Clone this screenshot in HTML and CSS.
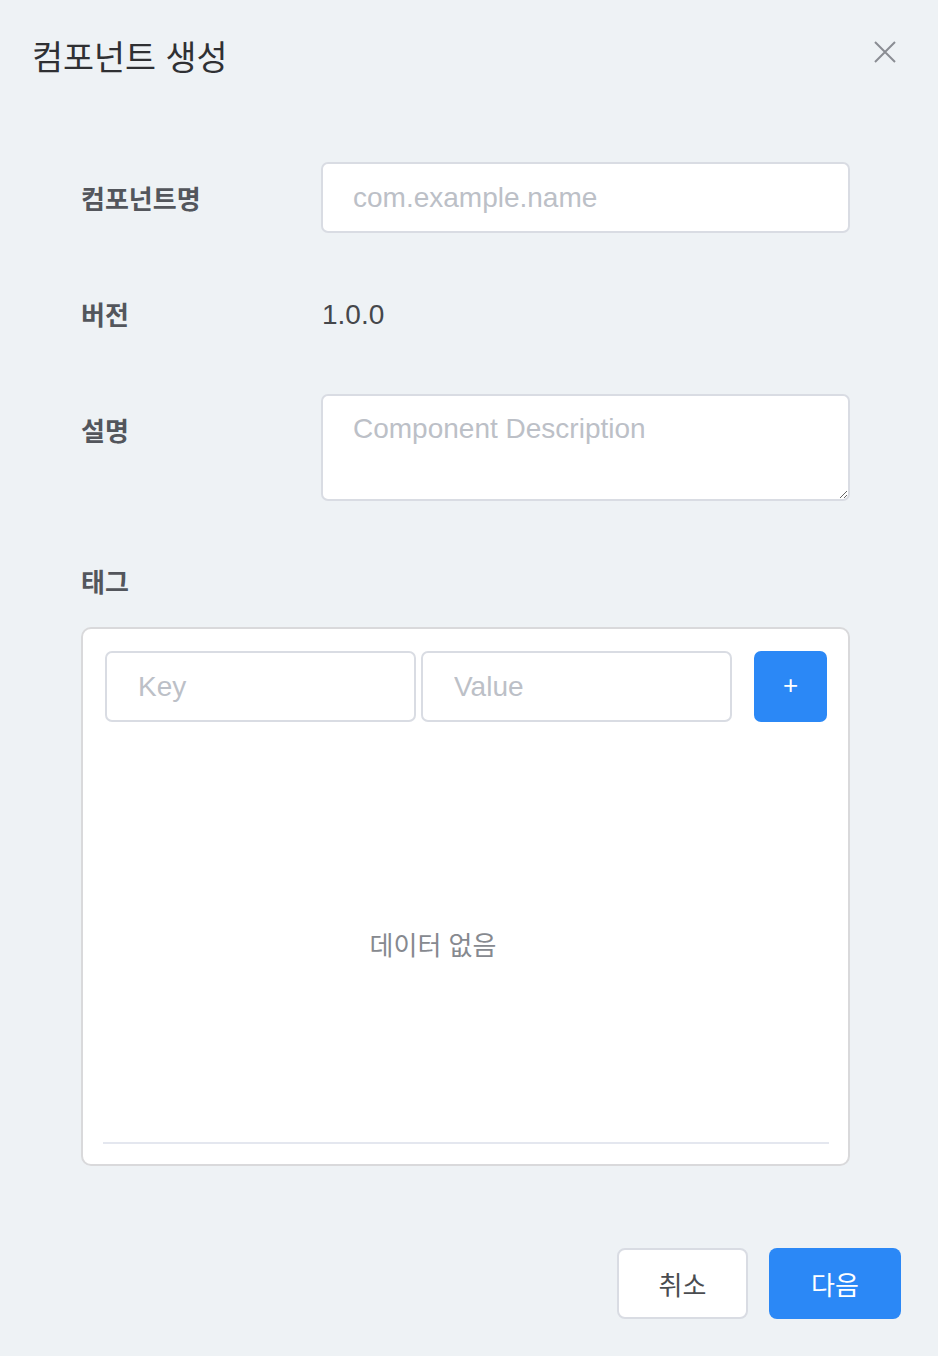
FILE: index.html
```html
<!DOCTYPE html>
<html lang="ko">
<head>
<meta charset="utf-8">
<title>컴포넌트 생성</title>
<link rel="stylesheet" href="styles.css">
</head>
<body>
<div class="dialog">
  <div class="header">
    <h1 class="title">컴포넌트 생성</h1>
    <button class="close" aria-label="닫기">
      <svg width="22" height="22" viewBox="0 0 22 22"><path d="M1 1 L21 21 M21 1 L1 21" stroke="#8a8d93" stroke-width="2" fill="none"/></svg>
    </button>
  </div>

  <div class="form">
    <div class="row">
      <label class="label">컴포넌트명</label>
      <input class="field" type="text" placeholder="com.example.name">
    </div>
    <div class="row">
      <label class="label">버전</label>
      <div class="value">1.0.0</div>
    </div>
    <div class="row">
      <label class="label">설명</label>
      <textarea class="field area" placeholder="Component Description"></textarea>
    </div>
    <div class="tag-label">태그</div>
    <div class="tag-box">
      <div class="tag-inputs">
        <input class="field small" type="text" placeholder="Key">
        <input class="field small" type="text" placeholder="Value">
        <button class="add">+</button>
      </div>
      <div class="empty">데이터 없음</div>
      <div class="divider"></div>
    </div>
  </div>

  <div class="footer">
    <button class="btn cancel">취소</button>
    <button class="btn primary">다음</button>
  </div>
</div>
</body>
</html>
```

FILE: styles.css
```css
* { box-sizing: border-box; }
html, body { margin: 0; padding: 0; }
body {
  background: #eef2f5;
  font-family: "Liberation Sans", "Noto Sans CJK KR", sans-serif;
  width: 938px;
  height: 1356px;
}
.dialog {
  padding: 0 37px 0 32px;
}
.header {
  display: flex;
  justify-content: space-between;
  align-items: flex-start;
  height: 162px;
}
.title {
  margin: 33px 0 0 0;
  font-family: "Noto Sans CJK KR", sans-serif;
  font-size: 33.7px;
  font-weight: 400;
  color: #2f3033;
  line-height: 46px;
}
.close {
  margin: 41px 5px 0 0;
  padding: 0;
  border: 0;
  background: none;
  width: 22px;
  height: 22px;
  display: flex;
}
.form {
  padding-left: 49px;
  width: 818px;
}
.row {
  display: flex;
  align-items: flex-start;
  margin-bottom: 45px;
}
.label {
  width: 240px;
  flex: none;
  font-family: "Noto Sans CJK KR", sans-serif;
  font-size: 26px;
  font-weight: 700;
  color: #53565c;
  height: 71px;
  line-height: 71px;
}
.field {
  width: 529px;
  height: 71px;
  border: 2px solid #d9dce3;
  border-radius: 7px;
  background: #fff;
  padding: 0 30px;
  font-family: "Liberation Sans", "Noto Sans CJK KR", sans-serif;
  font-size: 28px;
  color: #333;
  outline: none;
}
.field::placeholder { color: #bcc0c7; }
.area {
  height: 107px;
  padding-top: 16px;
  resize: vertical;
  line-height: 1.2;
  display: block;
}
.value {
  height: 71px;
  line-height: 73px;
  font-size: 28px;
  color: #45474b;
  padding-left: 1px;
}
.tag-label {
  font-family: "Noto Sans CJK KR", sans-serif;
  font-size: 26px;
  font-weight: 700;
  color: #53565c;
  line-height: 46px;
  padding-top: 12px;
  margin-bottom: 23px;
}
.tag-box {
  width: 769px;
  height: 539px;
  background: #fff;
  border: 2px solid #d9d9db;
  border-radius: 10px;
  padding: 22px 21px 0 22px;
}
.tag-inputs {
  display: flex;
  align-items: center;
}
.small {
  width: 311px;
  padding-left: 31px;
  border-radius: 7px;
}
.small + .small { margin-left: 5px; }
.add {
  margin-left: 22px;
  width: 73px;
  height: 71px;
  border: 0;
  border-radius: 7px;
  background: #2b88f6;
  color: #fff;
  font-size: 26px;
  font-family: "Liberation Sans", sans-serif;
  padding: 0 0 2px 0;
}
.empty {
  height: 398px;
  margin-top: 22px;
  padding-right: 66px;
  display: flex;
  align-items: center;
  justify-content: center;
  font-family: "Noto Sans CJK KR", sans-serif;
  font-size: 26px;
  color: #86898f;
}
.divider {
  height: 2px;
  background: #e4e7ef;
  margin: 0 -2px;
}
.footer {
  display: flex;
  justify-content: flex-end;
  margin-top: 82px;
  gap: 21px;
}
.btn {
  height: 71px;
  border-radius: 8px;
  font-family: "Noto Sans CJK KR", sans-serif;
  font-size: 26px;
  padding: 0;
}
.cancel {
  width: 131px;
  background: #fff;
  border: 2px solid #d9dce3;
  color: #4a4c50;
}
.primary {
  width: 132px;
  background: #2b88f6;
  border: 0;
  color: #fff;
}
```
